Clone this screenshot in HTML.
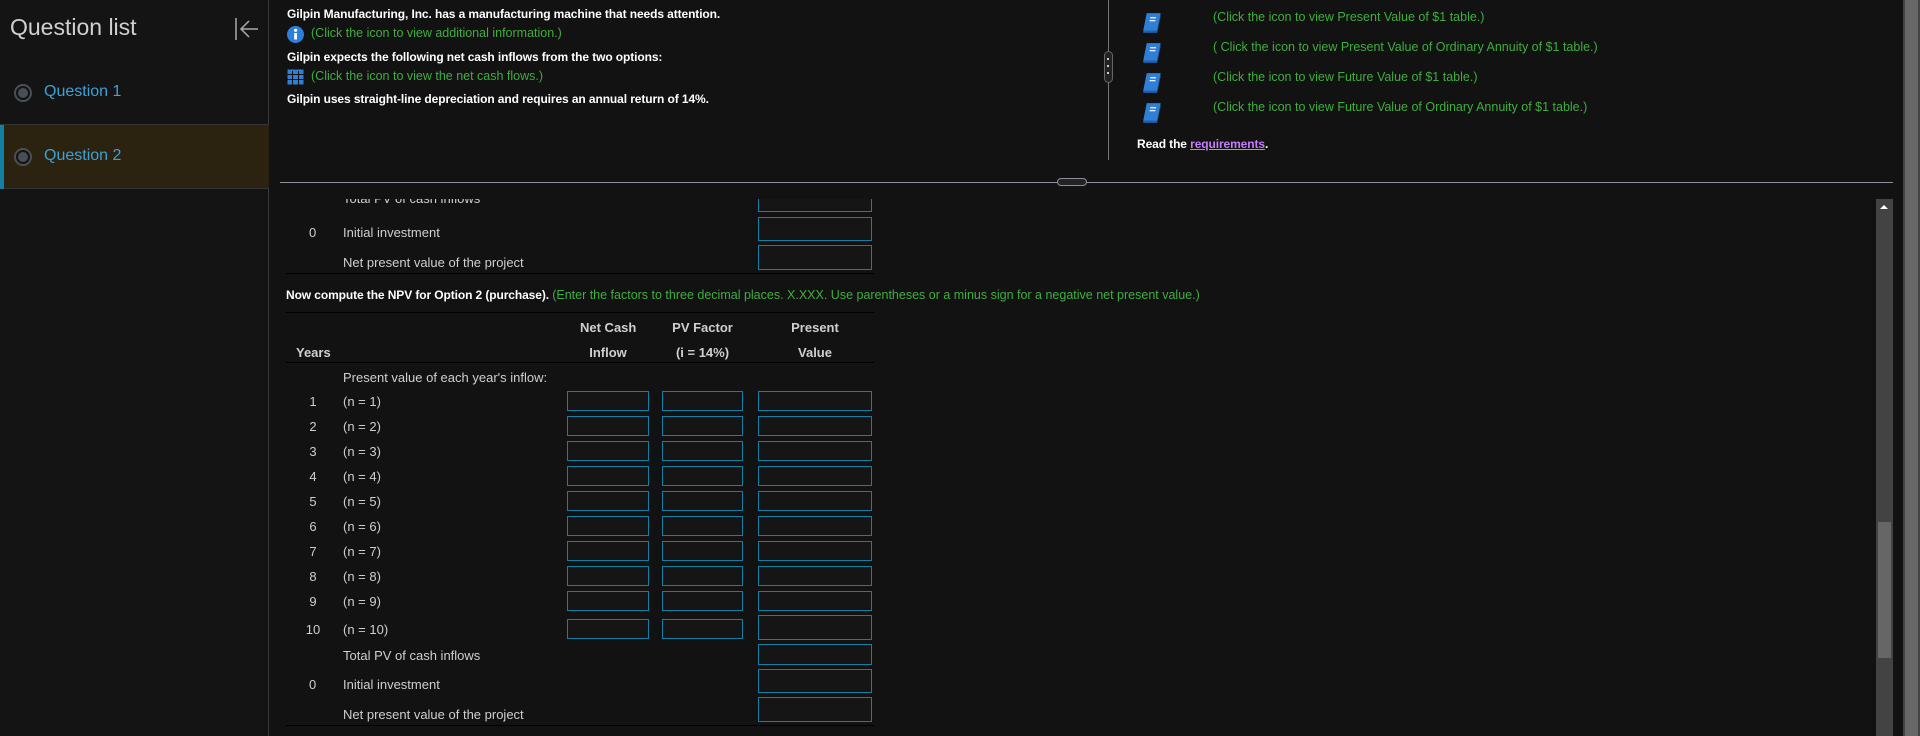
<!DOCTYPE html>
<html><head><meta charset="utf-8">
<style>
*{margin:0;padding:0;box-sizing:border-box}
body{width:1920px;height:736px;background:#121212;font-family:"Liberation Sans",Arial,sans-serif;position:relative;overflow:hidden;color:#e6e6e6}
.a{position:absolute;white-space:nowrap}
.side{position:absolute;left:0;top:0;width:269px;height:736px;background:#141414;border-right:1px solid #3a3a3a}
.q{position:absolute;left:0;width:269px;height:64px;border-bottom:1px solid #333}
.q .r{position:absolute;left:14px;top:23px;width:18px;height:18px;border-radius:50%;border:2px solid #4a4f55;background:#141414}
.q .r:after{content:"";position:absolute;left:2px;top:2px;width:10px;height:10px;border-radius:50%;background:#4a4f55}
.q span{position:absolute;left:44px;top:22px;font-size:16px;color:#3ea0d6}
.t{font-size:12px;color:#fff;font-weight:bold;letter-spacing:-0.1px}
.g{color:#3fae3f;font-weight:normal;font-size:12.5px;letter-spacing:0}
.tb{font-size:13px;color:#cfcfcf}
.box{position:absolute;border:1px solid #127fa3;background:#151515}
.hl{position:absolute;height:1px;background:#000;left:286px;width:588px}
.book{position:absolute;left:1142px;width:21px;height:22px}
</style></head><body>
<div class="side">
 <div class="a" style="left:10px;top:14px;font-size:23px;color:#d0d0d0">Question list</div>
 <svg class="a" style="left:234px;top:17px" width="26" height="24" viewBox="0 0 26 24"><line x1="2" y1="1" x2="2" y2="23" stroke="#aaa" stroke-width="1.5"/><line x1="8" y1="12" x2="24" y2="12" stroke="#aaa" stroke-width="1.5"/><polyline points="15,4 7,12 15,20" fill="none" stroke="#aaa" stroke-width="1.5"/></svg>
 <div class="q" style="top:61px"><div class="r"></div><span>Question 1</span></div>
 <div class="q" style="top:125px;background:#2b2310"><div style="position:absolute;left:0;top:0;width:4px;height:64px;background:#127fa3"></div><div class="r"></div><span>Question 2</span></div>
</div>

<div class="a t" style="left:287px;top:7px">Gilpin Manufacturing, Inc. has a manufacturing machine that needs attention.</div>
<svg class="a" style="left:287px;top:26px" width="17" height="17"><circle cx="8.5" cy="8.5" r="8.5" fill="#2f7fd6"/><rect x="7.2" y="7" width="2.8" height="6.5" fill="#fff"/><circle cx="8.6" cy="4.3" r="1.6" fill="#fff"/></svg>
<div class="a t g" style="left:311px;top:26px">(Click the icon to view additional information.)</div>
<div class="a t" style="left:287px;top:50px">Gilpin expects the following net cash inflows from the two options:</div>
<svg class="a" style="left:287px;top:69px" width="17" height="16"><rect x="0.5" y="0.5" width="16" height="15" fill="#2f7fd6"/><g stroke="#121212" stroke-width="1"><line x1="0" y1="5.5" x2="17" y2="5.5"/><line x1="0" y1="10.5" x2="17" y2="10.5"/><line x1="5.5" y1="2" x2="5.5" y2="16"/><line x1="11.5" y1="2" x2="11.5" y2="16"/></g></svg>
<div class="a t g" style="left:311px;top:69px">(Click the icon to view the net cash flows.)</div>
<div class="a t" style="left:287px;top:92px">Gilpin uses straight-line depreciation and requires an annual return of 14%.</div>

<div class="a" style="left:1108px;top:0;width:1px;height:160px;background:#777"></div>
<div class="a" style="left:1104px;top:51px;width:9px;height:32px;border:1px solid #666;border-radius:5px;background:#222"></div>
<div class="a" style="left:1107px;top:58px;width:2px;height:2px;background:#ccc;box-shadow:0 7px 0 #ccc,0 14px 0 #ccc"></div>

<svg class="book" style="top:12px" viewBox="0 0 18 19"><path d="M4 1h12l-3 15H1z" fill="#2f7fd6"/><path d="M1 16h12l3-15v3l-3 14H1z" fill="#1f5fae"/><line x1="7" y1="5" x2="12" y2="5" stroke="#fff"/><line x1="6.5" y1="7.5" x2="11.5" y2="7.5" stroke="#fff"/></svg>
<svg class="book" style="top:42px" viewBox="0 0 18 19"><path d="M4 1h12l-3 15H1z" fill="#2f7fd6"/><path d="M1 16h12l3-15v3l-3 14H1z" fill="#1f5fae"/><line x1="7" y1="5" x2="12" y2="5" stroke="#fff"/><line x1="6.5" y1="7.5" x2="11.5" y2="7.5" stroke="#fff"/></svg>
<svg class="book" style="top:72px" viewBox="0 0 18 19"><path d="M4 1h12l-3 15H1z" fill="#2f7fd6"/><path d="M1 16h12l3-15v3l-3 14H1z" fill="#1f5fae"/><line x1="7" y1="5" x2="12" y2="5" stroke="#fff"/><line x1="6.5" y1="7.5" x2="11.5" y2="7.5" stroke="#fff"/></svg>
<svg class="book" style="top:102px" viewBox="0 0 18 19"><path d="M4 1h12l-3 15H1z" fill="#2f7fd6"/><path d="M1 16h12l3-15v3l-3 14H1z" fill="#1f5fae"/><line x1="7" y1="5" x2="12" y2="5" stroke="#fff"/><line x1="6.5" y1="7.5" x2="11.5" y2="7.5" stroke="#fff"/></svg>
<div class="a t g" style="left:1213px;top:10px">(Click the icon to view Present Value of $1 table.)</div>
<div class="a t g" style="left:1213px;top:40px">( Click the icon to view Present Value of Ordinary Annuity of $1 table.)</div>
<div class="a t g" style="left:1213px;top:70px">(Click the icon to view Future Value of $1 table.)</div>
<div class="a t g" style="left:1213px;top:100px">(Click the icon to view Future Value of Ordinary Annuity of $1 table.)</div>
<div class="a t" style="left:1137px;top:137px">Read the <span style="color:#c77dff;text-decoration:underline">requirements</span>.</div>

<div class="a" style="left:280px;top:182px;width:1613px;height:1px;background:#8a8f9a"></div>
<div class="a" style="left:1057px;top:178px;width:30px;height:8px;border:1px solid #8a8f9a;border-radius:4px;background:#222"></div>

<div class="a" style="left:1876px;top:199px;width:17px;height:537px;background:#434343"></div>
<div class="a" style="left:1880px;top:205px;width:0;height:0;border-left:4px solid transparent;border-right:4px solid transparent;border-bottom:4px solid #fff"></div>
<div class="a" style="left:1878px;top:522px;width:13px;height:136px;background:#666"></div>
<div class="a" style="left:1903px;top:0;width:17px;height:736px;background:#444"></div>
<div class="a" style="left:1905px;top:0;width:13px;height:736px;background:#676767"></div>

<div class="a" style="left:280px;top:199px;width:1590px;height:537px;overflow:hidden">
 <div style="position:relative;left:-280px;top:-199px">
  <div class="a tb" style="left:343px;top:191px">Total PV of cash inflows</div>
  <div class="box" style="left:758px;top:190px;width:114px;height:22px"></div>
 </div>
</div>

<div class="a tb" style="left:309px;top:225px">0</div>
<div class="a tb" style="left:343px;top:225px">Initial investment</div>
<div class="box" style="left:758px;top:217px;width:114px;height:24px"></div>
<div class="a tb" style="left:343px;top:255px">Net present value of the project</div>
<div class="box" style="left:758px;top:245px;width:114px;height:25px"></div>
<div class="hl" style="top:273px"></div>

<div class="a t" style="left:286px;top:288px">Now compute the NPV for Option 2 (purchase). <span class="g">(Enter the factors to three decimal places. X.XXX. Use parentheses or a minus sign for a negative net present value.)</span></div>
<div class="hl" style="top:312px"></div>
<div class="a tb" style="left:580px;top:320px;font-weight:bold;width:56px;text-align:center">Net Cash</div>
<div class="a tb" style="left:662px;top:320px;font-weight:bold;width:81px;text-align:center">PV Factor</div>
<div class="a tb" style="left:758px;top:320px;font-weight:bold;width:114px;text-align:center">Present</div>
<div class="a tb" style="left:296px;top:345px;font-weight:bold">Years</div>
<div class="a tb" style="left:567px;top:345px;font-weight:bold;width:82px;text-align:center">Inflow</div>
<div class="a tb" style="left:662px;top:345px;font-weight:bold;width:81px;text-align:center">(i = 14%)</div>
<div class="a tb" style="left:758px;top:345px;font-weight:bold;width:114px;text-align:center">Value</div>
<div class="hl" style="top:362px"></div>
<div class="a tb" style="left:343px;top:370px">Present value of each year's inflow:</div>

<div class="a tb" style="left:300px;top:394px;width:26px;text-align:center">1</div><div class="a tb" style="left:343px;top:394px">(n = 1)</div>
<div class="box" style="left:567px;top:391px;width:82px;height:20px"></div><div class="box" style="left:662px;top:391px;width:81px;height:20px"></div><div class="box" style="left:758px;top:391px;width:114px;height:20px"></div>
<div class="a tb" style="left:300px;top:419px;width:26px;text-align:center">2</div><div class="a tb" style="left:343px;top:419px">(n = 2)</div>
<div class="box" style="left:567px;top:416px;width:82px;height:20px"></div><div class="box" style="left:662px;top:416px;width:81px;height:20px"></div><div class="box" style="left:758px;top:416px;width:114px;height:20px"></div>
<div class="a tb" style="left:300px;top:444px;width:26px;text-align:center">3</div><div class="a tb" style="left:343px;top:444px">(n = 3)</div>
<div class="box" style="left:567px;top:441px;width:82px;height:20px"></div><div class="box" style="left:662px;top:441px;width:81px;height:20px"></div><div class="box" style="left:758px;top:441px;width:114px;height:20px"></div>
<div class="a tb" style="left:300px;top:469px;width:26px;text-align:center">4</div><div class="a tb" style="left:343px;top:469px">(n = 4)</div>
<div class="box" style="left:567px;top:466px;width:82px;height:20px"></div><div class="box" style="left:662px;top:466px;width:81px;height:20px"></div><div class="box" style="left:758px;top:466px;width:114px;height:20px"></div>
<div class="a tb" style="left:300px;top:494px;width:26px;text-align:center">5</div><div class="a tb" style="left:343px;top:494px">(n = 5)</div>
<div class="box" style="left:567px;top:491px;width:82px;height:20px"></div><div class="box" style="left:662px;top:491px;width:81px;height:20px"></div><div class="box" style="left:758px;top:491px;width:114px;height:20px"></div>
<div class="a tb" style="left:300px;top:519px;width:26px;text-align:center">6</div><div class="a tb" style="left:343px;top:519px">(n = 6)</div>
<div class="box" style="left:567px;top:516px;width:82px;height:20px"></div><div class="box" style="left:662px;top:516px;width:81px;height:20px"></div><div class="box" style="left:758px;top:516px;width:114px;height:20px"></div>
<div class="a tb" style="left:300px;top:544px;width:26px;text-align:center">7</div><div class="a tb" style="left:343px;top:544px">(n = 7)</div>
<div class="box" style="left:567px;top:541px;width:82px;height:20px"></div><div class="box" style="left:662px;top:541px;width:81px;height:20px"></div><div class="box" style="left:758px;top:541px;width:114px;height:20px"></div>
<div class="a tb" style="left:300px;top:569px;width:26px;text-align:center">8</div><div class="a tb" style="left:343px;top:569px">(n = 8)</div>
<div class="box" style="left:567px;top:566px;width:82px;height:20px"></div><div class="box" style="left:662px;top:566px;width:81px;height:20px"></div><div class="box" style="left:758px;top:566px;width:114px;height:20px"></div>
<div class="a tb" style="left:300px;top:594px;width:26px;text-align:center">9</div><div class="a tb" style="left:343px;top:594px">(n = 9)</div>
<div class="box" style="left:567px;top:591px;width:82px;height:20px"></div><div class="box" style="left:662px;top:591px;width:81px;height:20px"></div><div class="box" style="left:758px;top:591px;width:114px;height:20px"></div>
<div class="a tb" style="left:300px;top:622px;width:26px;text-align:center">10</div><div class="a tb" style="left:343px;top:622px">(n = 10)</div>
<div class="box" style="left:567px;top:619px;width:82px;height:20px"></div><div class="box" style="left:662px;top:619px;width:81px;height:20px"></div><div class="box" style="left:758px;top:615px;width:114px;height:25px"></div>

<div class="a tb" style="left:343px;top:648px">Total PV of cash inflows</div>
<div class="box" style="left:758px;top:644px;width:114px;height:21px"></div>
<div class="a tb" style="left:309px;top:677px">0</div>
<div class="a tb" style="left:343px;top:677px">Initial investment</div>
<div class="box" style="left:758px;top:669px;width:114px;height:24px"></div>
<div class="a tb" style="left:343px;top:707px">Net present value of the project</div>
<div class="box" style="left:758px;top:697px;width:114px;height:25px"></div>
<div class="hl" style="top:725px"></div>
</body></html>
